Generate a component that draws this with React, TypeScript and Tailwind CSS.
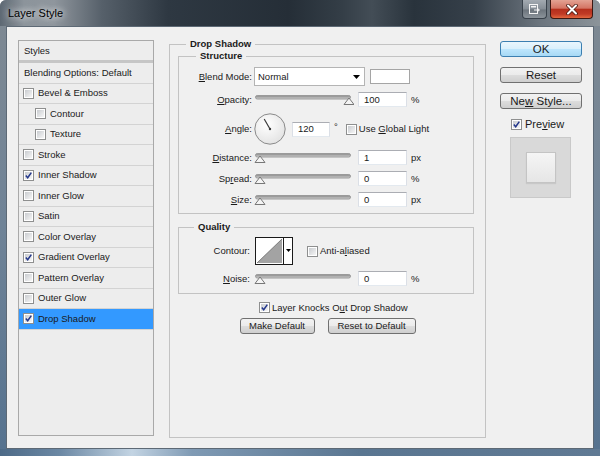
import React from "react"

interface StyleItem {
  name: string
  checked?: boolean
  indent?: boolean
  active?: boolean
}

const styleItems: StyleItem[] = [
  { name: "Bevel & Emboss" },
  { name: "Contour", indent: true },
  { name: "Texture", indent: true },
  { name: "Stroke" },
  { name: "Inner Shadow", checked: true },
  { name: "Inner Glow" },
  { name: "Satin" },
  { name: "Color Overlay" },
  { name: "Gradient Overlay", checked: true },
  { name: "Pattern Overlay" },
  { name: "Outer Glow" },
  { name: "Drop Shadow", checked: true, active: true },
]

function Check({ checked }: { checked?: boolean }) {
  return (
    <span className="grid h-[11px] w-[11px] shrink-0 border border-[#8e8f8f] bg-white p-[1px]">
      <span className="col-start-1 row-start-1 bg-gradient-to-br from-[#c9ccd0] to-[#f6f6f6]" />
      {checked && (
        <svg width="7" height="7" viewBox="0 0 7 7" className="col-start-1 row-start-1">
          <path d="M0.8 3.6 L2.7 5.8 L6.3 0.6" fill="none" stroke="#24388c" strokeWidth="1.5" />
        </svg>
      )}
    </span>
  )
}

function Field({ value, w }: { value: string; w: string }) {
  return (
    <div className={`flex h-[15px] ${w} shrink-0 items-center border border-[#dbdfe6] border-t-[#abadb3] border-b-[#e3e9ef] bg-white pl-[5px]`}>
      {value}
    </div>
  )
}

function Slider({ pos }: { pos: number }) {
  return (
    <svg width="100" height="15" viewBox="0 0 100 15" className="ml-[2px] shrink-0">
      <defs>
        <linearGradient id="trk" x1="0" y1="0" x2="0" y2="1">
          <stop offset="0" stopColor="#858585" />
          <stop offset="1" stopColor="#d2d2d2" />
        </linearGradient>
      </defs>
      <rect x="1.5" y="3.5" width="95" height="3.5" rx="1.75" fill="url(#trk)" stroke="#9a9a9a" />
      <path d={`M${pos} 6 L${pos + 5} 12.5 L${pos - 5} 12.5 Z`} fill="#f4f4f4" stroke="#777" />
    </svg>
  )
}

function Label({ children }: { children: React.ReactNode }) {
  return <span className="w-[73px] shrink-0 text-right">{children}</span>
}

function Button({ children, primary }: { children: React.ReactNode; primary?: boolean }) {
  return (
    <div
      className={`flex h-[16px] items-center justify-center rounded-[3px] border ${
        primary
          ? "border-[#3c7fb1] bg-[linear-gradient(180deg,#eaf6fd_0%,#d9f0fc_50%,#bee6fd_50%,#a7d9f5_100%)]"
          : "border-[#707070] bg-[linear-gradient(180deg,#f2f2f2_0%,#ebebeb_50%,#dddddd_50%,#cfcfcf_100%)]"
      }`}
    >
      {children}
    </div>
  )
}

function TitleBar() {
  return (
    <div className="flex h-[26px] shrink-0 items-start bg-[linear-gradient(90deg,#5d6873_0%,#8c949b_4%,#8f969d_9%,#56606a_17%,#2e3842_28%,#252e37_48%,#343e47_57%,#434d56_62%,#29333c_69%,#36404a_79%,#6c757e_90%,#8c949a_100%)]">
      <span className="ml-[8px] mt-[7px] text-[11px] leading-[13px] text-black [text-shadow:0_0_6px_rgba(255,255,255,0.9),0_0_10px_rgba(255,255,255,0.7)]">
        Layer Style
      </span>
      <div className="ml-auto mr-[7px] flex gap-[3px]">
        <div className="flex h-[19px] w-[25px] items-center justify-center rounded-b-[4px] border border-t-0 border-[#39424b] bg-[linear-gradient(180deg,#a3aab1_0%,#858d95_50%,#6c747c_55%,#8b939a_100%)]">
          <svg width="12" height="10" viewBox="0 0 12 10">
            <rect x="0.5" y="0.5" width="8" height="9" fill="none" stroke="#f4f4f4" />
            <rect x="2" y="2" width="5" height="1.5" fill="#f4f4f4" />
            <path d="M5 6 H10 M8.5 4.5 L10.5 6 L8.5 7.5" fill="none" stroke="#f4f4f4" />
          </svg>
        </div>
        <div className="flex h-[19px] w-[43px] items-center justify-center rounded-b-[4px] border border-t-0 border-[#3d1812] bg-[linear-gradient(180deg,#e3a293_0%,#d47564_45%,#b5301d_52%,#c03a25_78%,#e2673f_100%)]">
          <svg width="12" height="11" viewBox="0 0 12 11">
            <path d="M2 1.5 L10 9.5 M10 1.5 L2 9.5" stroke="#4a1a12" strokeWidth="3.6" strokeLinecap="round" />
            <path d="M2 1.5 L10 9.5 M10 1.5 L2 9.5" stroke="#ffffff" strokeWidth="2" strokeLinecap="round" />
          </svg>
        </div>
      </div>
    </div>
  )
}

function StylesPanel() {
  return (
    <div className="ml-[11px] mt-[13px] flex h-[396px] w-[136px] shrink-0 flex-col border border-[#a9a9a9] bg-[#ededed]">
      <div className="flex h-[22px] shrink-0 items-center border-b-[3px] border-[#c6c6c6] pl-[5px]">Styles</div>
      <div className="flex h-[20.5px] shrink-0 items-center border-b border-[#d3d3d3] pl-[5px]">Blending Options: Default</div>
      {styleItems.map((item) => (
        <div
          key={item.name}
          className={`flex h-[20.5px] shrink-0 items-center gap-[4px] border-b border-[#d3d3d3] ${
            item.indent ? "pl-[16px]" : "pl-[4px]"
          } ${item.active ? "bg-[#3399ff]" : ""}`}
        >
          <Check checked={item.checked} />
          <span>{item.name}</span>
        </div>
      ))}
    </div>
  )
}

function Dial() {
  return (
    <svg width="32" height="32" viewBox="0 0 32 32" className="ml-[2px] shrink-0">
      <defs>
        <radialGradient id="dial" cx="0.4" cy="0.35" r="0.7">
          <stop offset="0" stopColor="#ffffff" />
          <stop offset="1" stopColor="#e2e2e2" />
        </radialGradient>
      </defs>
      <circle cx="16" cy="16" r="15.2" fill="url(#dial)" stroke="#8a8a8a" />
      <path d="M16 16 L10.2 6" stroke="#3a3a3a" strokeWidth="1.2" />
      <circle cx="16" cy="16" r="1.2" fill="#3a3a3a" />
    </svg>
  )
}

function Contour() {
  return (
    <svg width="38" height="28" viewBox="0 0 38 28" className="ml-[3px] shrink-0">
      <rect x="0.5" y="0.5" width="37" height="27" fill="#ffffff" stroke="#1a1a1a" />
      <path d="M2 26 L27 2 L27 26 Z" fill="#a3a3a3" />
      <path d="M2 26 L27 2" stroke="#6a6a6a" strokeWidth="0.8" />
      <path d="M28.5 1 V27" stroke="#1a1a1a" />
      <path d="M31 12 H36 L33.5 15 Z" fill="#000" />
    </svg>
  )
}

function MainPanel() {
  return (
    <fieldset className="ml-[15px] mt-[11px] h-[400px] w-[317px] shrink-0 border border-[#c3c3c3] px-[8px]">
      <legend className="ml-[8px] px-[4px] font-bold leading-[12px]">Drop Shadow</legend>

      <fieldset className="w-[296px] border border-[#c3c3c3] pb-[6px]">
        <legend className="ml-[17px] px-[4px] font-bold leading-[12px]">Structure</legend>

        <div className="mt-[5px] flex h-[19px] items-center">
          <Label>
            <u>B</u>lend Mode:
          </Label>
          <div className="ml-[2px] flex h-[19px] w-[111px] items-center justify-between border border-[#b4b4b4] bg-white pl-[3px] pr-[4px]">
            <span>Normal</span>
            <svg width="7" height="4" viewBox="0 0 7 4">
              <path d="M0 0 H7 L3.5 4 Z" fill="#000" />
            </svg>
          </div>
          <div className="ml-[5px] h-[15px] w-[40px] border border-[#a5a5a5] bg-white" />
        </div>

        <div className="mt-[6px] flex h-[15px] items-center">
          <Label>
            <u>O</u>pacity:
          </Label>
          <Slider pos={95} />
          <div className="ml-[4px]">
            <Field value="100" w="w-[49px]" />
          </div>
          <span className="ml-[4px]">%</span>
        </div>

        <div className="mt-[6px] flex h-[32px] items-center">
          <Label>
            <u>A</u>ngle:
          </Label>
          <Dial />
          <div className="ml-[6px]">
            <Field value="120" w="w-[38px]" />
          </div>
          <span className="ml-[4px] self-start pt-[8px]">°</span>
          <div className="ml-[8px] flex items-center gap-[2px]">
            <Check />
            <span>
              Use <u>G</u>lobal Light
            </span>
          </div>
        </div>

        <div className="mt-[5px] flex h-[15px] items-center">
          <Label>
            <u>D</u>istance:
          </Label>
          <Slider pos={6} />
          <div className="ml-[4px]">
            <Field value="1" w="w-[49px]" />
          </div>
          <span className="ml-[4px]">px</span>
        </div>

        <div className="mt-[6px] flex h-[15px] items-center">
          <Label>
            Sp<u>r</u>ead:
          </Label>
          <Slider pos={6} />
          <div className="ml-[4px]">
            <Field value="0" w="w-[49px]" />
          </div>
          <span className="ml-[4px]">%</span>
        </div>

        <div className="mt-[6px] flex h-[15px] items-center">
          <Label>
            <u>S</u>ize:
          </Label>
          <Slider pos={6} />
          <div className="ml-[4px]">
            <Field value="0" w="w-[49px]" />
          </div>
          <span className="ml-[4px]">px</span>
        </div>
      </fieldset>

      <fieldset className="mt-[7px] w-[296px] border border-[#c3c3c3] pb-[7px]">
        <legend className="ml-[15px] px-[4px] font-bold leading-[12px]">Quality</legend>

        <div className="mt-[4px] flex h-[28px] items-center">
          <span className="w-[73px] shrink-0 pr-[2px] text-right">Contour:</span>
          <Contour />
          <div className="ml-[14px] flex items-center gap-[2px]">
            <Check />
            <span>
              Anti-a<u>l</u>iased
            </span>
          </div>
        </div>

        <div className="mt-[6px] flex h-[15px] items-center">
          <span className="w-[73px] shrink-0 pr-[2px] text-right">
            <u>N</u>oise:
          </span>
          <Slider pos={6} />
          <div className="ml-[4px]">
            <Field value="0" w="w-[49px]" />
          </div>
          <span className="ml-[4px]">%</span>
        </div>
      </fieldset>

      <div className="ml-[81px] mt-[7px] flex h-[13px] items-center gap-[2px]">
        <Check checked />
        <span>
          Layer Knocks O<u>u</u>t Drop Shadow
        </span>
      </div>

      <div className="mt-[4px] flex justify-center gap-[13px]">
        <div className="w-[75px]">
          <Button>Make Default</Button>
        </div>
        <div className="w-[88px]">
          <Button>Reset to Default</Button>
        </div>
      </div>
    </fieldset>
  )
}

function SidePanel() {
  return (
    <div className="ml-[14px] mt-[14px] flex w-[82px] shrink-0 flex-col text-[11.5px] leading-[14px]">
      <Button primary>OK</Button>
      <div className="mt-[10px]">
        <Button>Reset</Button>
      </div>
      <div className="mt-[10px]">
        <Button>
          <span>
            Ne<u>w</u> Style...
          </span>
        </Button>
      </div>
      <div className="ml-[11px] mt-[9px] flex h-[12px] items-center gap-[3px] text-[11px]">
        <Check checked />
        <span>
          Pre<u>v</u>iew
        </span>
      </div>
      <div className="ml-[10px] mt-[7px] flex h-[61px] w-[61px] items-center justify-center border border-[#c9c9c9] bg-[#d9d9d9]">
        <div className="h-[31px] w-[30px] border border-[#c4c4c4] bg-gradient-to-b from-[#f5f5f5] to-[#e6e6e6] shadow-[0_1px_1px_rgba(0,0,0,0.08)]" />
      </div>
    </div>
  )
}

export default function App() {
  return (
    <div className="flex h-[456px] w-[600px] flex-col overflow-hidden rounded-t-[6px] bg-gradient-to-b from-[#7f8992] via-[#6f8397] to-[#55728f] font-['Liberation_Sans',Arial,sans-serif] text-[9.5px] leading-[12px] text-[#1a1a1a]">
      <TitleBar />
      <div className="mx-[6px] flex h-[423px] shrink-0 items-start border border-[#5d6975] bg-[#f0f0f0]">
        <StylesPanel />
        <MainPanel />
        <SidePanel />
      </div>
      <div className="h-[7px] shrink-0 bg-[linear-gradient(90deg,#4d6a87_0%,#6b88a4_10%,#c3d4e3_22%,#7f9ab4_32%,#5a7691_60%,#607a94_100%)]" />
    </div>
  )
}
